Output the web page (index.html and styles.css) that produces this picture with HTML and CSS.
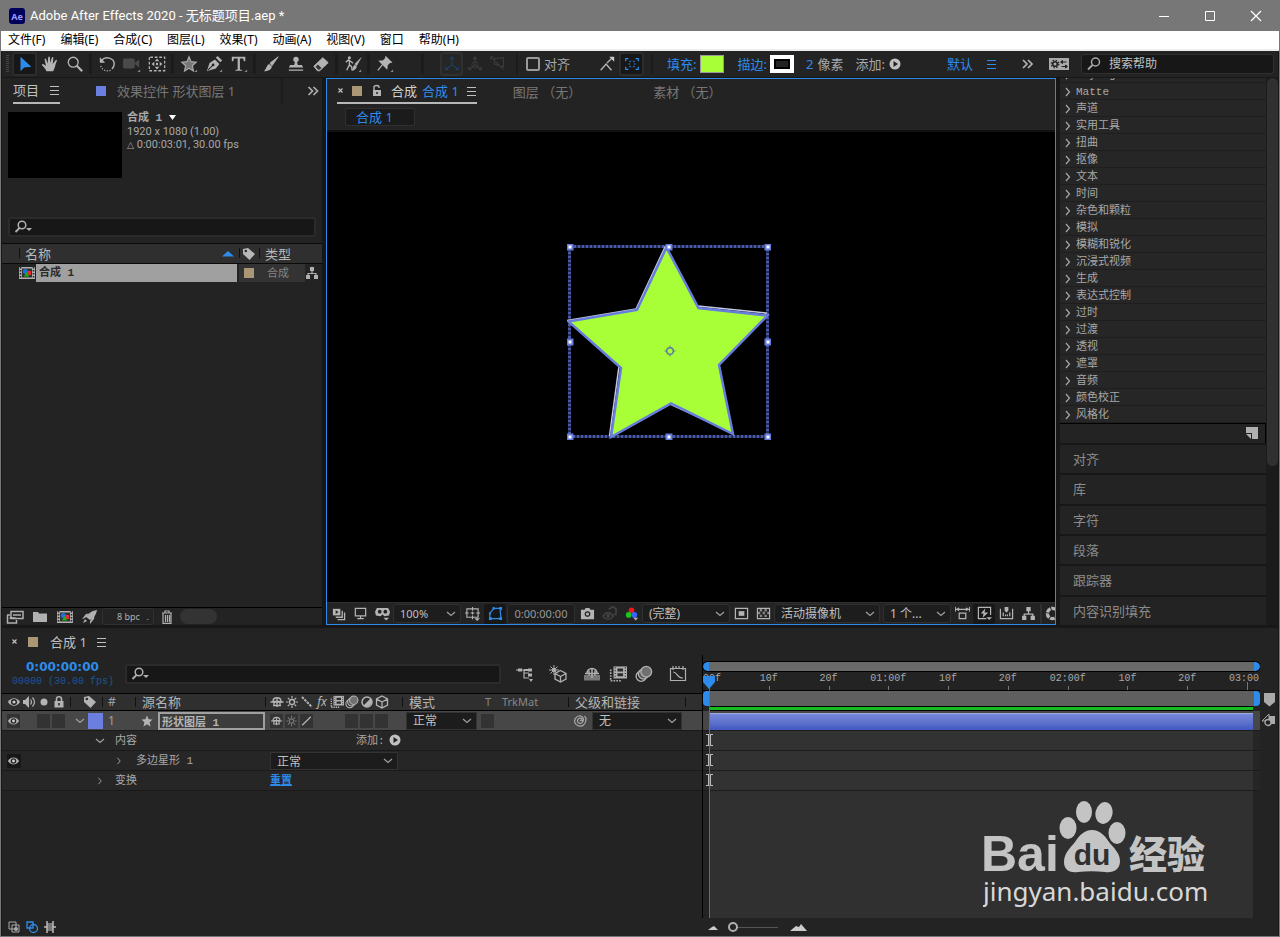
FILE: index.html
```html
<!DOCTYPE html>
<html lang="zh-CN">
<head>
<meta charset="utf-8">
<meta name="viewport" content="width=device-width, initial-scale=1">
<title>Adobe After Effects 2020 - 无标题项目.aep *</title>
<link rel="stylesheet" href="styles.css">
</head>
<body>
<svg class="sprite" aria-hidden="true">
  <symbol id="corner" viewBox="0 0 20 20"><path d="M19 16v3h-3z" fill="#8a8a8a"/></symbol>
  <symbol id="search" viewBox="0 0 16 16"><circle cx="9.500" cy="6" r="4" fill="none" stroke="currentColor" stroke-width="1.500"/><path d="M6.500 9 2 13.500" stroke="currentColor" stroke-width="1.800"/></symbol>
  <symbol id="searchdrop" viewBox="0 0 20 16"><circle cx="8" cy="6" r="3.800" fill="none" stroke="currentColor" stroke-width="1.500"/><path d="M5.500 9 1.500 13" stroke="currentColor" stroke-width="1.800"/><path d="M12 9h6l-3 3z" fill="currentColor"/></symbol>
  <symbol id="menu" viewBox="0 0 10 10"><path d="M0 1.500h9M0 5.500h9M0 9.500h9" stroke="currentColor"/></symbol>
  <symbol id="more" viewBox="0 0 12 10"><path d="M1 1l4 4-4 4M6 1l4 4-4 4" fill="none" stroke="currentColor" stroke-width="1.700"/></symbol>
  <symbol id="close" viewBox="0 0 8 8"><path d="M1.500 1.500l4 4M5.500 1.500l-4 4" stroke="currentColor" stroke-width="1.200"/></symbol>
  <symbol id="right" viewBox="0 0 8 10"><path d="M2 1l3.500 4L2 9" fill="none" stroke="currentColor" stroke-width="1.200"/></symbol>
  <symbol id="down" viewBox="0 0 10 8"><path d="M1 2l4 3.500L9 2" fill="none" stroke="currentColor" stroke-width="1.200"/></symbol>
  <symbol id="eye" viewBox="0 0 14 12"><path d="M1 6c3-5 9-5 12 0-3 5-9 5-12 0z" fill="#b4b4b4"/><circle cx="7" cy="6" r="3" fill="#222"/><circle cx="7" cy="6" r="1.600" fill="#ccc"/></symbol>
  <symbol id="tag" viewBox="0 0 14 14"><path d="M1 2l5-1 7 6-5.500 6L1 7z" fill="currentColor"/><circle cx="3.800" cy="4" r="1.300" fill="#2b2b2b"/></symbol>
  <symbol id="shy" viewBox="0 0 14 14"><path d="M3 6.500C3 1.500 11 1.500 11 6.500z" fill="none" stroke="currentColor" stroke-width="1.300"/><path d="M0.500 7h13M3 10.500h8M7 3v9M4 7v3M10 7v3" stroke="currentColor" stroke-width="1.300"/></symbol>
  <symbol id="sun" viewBox="0 0 14 14"><circle cx="7" cy="7" r="2.500" fill="none" stroke="currentColor" stroke-width="1.300"/><path d="M7 1v2.500M7 10.500V13M1 7h2.500M10.500 7H13M2.800 2.800l1.700 1.700M9.500 9.500l1.700 1.700M11.200 2.800 9.500 4.500M4.500 9.500l-1.700 1.700" stroke="currentColor" stroke-width="1.200"/></symbol>
  <symbol id="film" viewBox="0 0 16 14"><path d="M1.500 3v10h10" fill="none" stroke="currentColor" stroke-width="1.500" stroke-dasharray="1.500 1"/><path d="M4 0h12v11H4z" fill="currentColor"/><path d="M7.500 2h5v2.800h-5zM7.500 6.300h5v2.800h-5z" fill="#2b2b2b"/><path d="M5.500 1v10M14.500 1v10" stroke="#2b2b2b" stroke-dasharray="1 1.500"/></symbol>
  <symbol id="blur" viewBox="0 0 16 16"><circle cx="5.500" cy="10" r="4.500" fill="none" stroke="currentColor" stroke-width="1.200"/><circle cx="7.500" cy="8" r="4.500" fill="#555" stroke="currentColor" stroke-width="1.200"/><circle cx="10" cy="6" r="4.800" fill="#707070" stroke="currentColor" stroke-width="1.200"/></symbol>
  <symbol id="cube" viewBox="0 0 14 14"><path d="M7 1l5.500 3v6L7 13l-5.500-3V4zM1.500 4 7 7l5.500-3M7 7v6" fill="none" stroke="currentColor" stroke-width="1.300"/></symbol>
  <symbol id="tree" viewBox="0 0 14 14"><path d="M5 1h4v4H5zM1 9h4v4H1zM9 9h4v4H9z" fill="currentColor"/><path d="M7 4v3.500M3 10V7.500h8V10" fill="none" stroke="currentColor" stroke-width="1.200"/></symbol>
  <symbol id="comp" viewBox="0 0 16 14"><path d="M0 1h16v12H0z" fill="#b0b0b0"/><path d="M1.500 1v12M14.500 1v12" stroke="#222" stroke-width="1.600" stroke-dasharray="1.500 1.500"/><path d="M3 2.500h10v9H3z" fill="#333"/><circle cx="6.300" cy="5.500" r="2.500" fill="#1e6fe0"/><path d="M8 5h4v4H8z" fill="#e03030"/><path d="M5 10.500 7.500 6l2.700 4.500z" fill="#18b41c"/></symbol>
  <symbol id="play" viewBox="0 0 12 12"><circle cx="6" cy="6" r="5.500" fill="#c0c0c0"/><path d="M4.500 3v6L9 6z" fill="#222"/></symbol>
  <symbol id="star" viewBox="0 0 20 20"><path d="M10 2l2.300 5.400 5.700.6-4.300 3.900 1.300 5.800-5-3-5 3 1.300-5.800L2 8l5.700-.6z" fill="currentColor"/></symbol>
</svg>

<div class="app">
  <header class="titlebar">
    <svg class="logo" viewBox="0 0 16 16" role="img" aria-label="Ae"><rect width="16" height="16" rx="3" fill="#00005b"/><text x="8" y="11.500" text-anchor="middle" class="logo-text">Ae</text></svg>
    <h1>Adobe After Effects 2020 - 无标题项目.aep *</h1>
    <button aria-label="最小化"><svg width="12" height="12"><path d="M1 6.500h10" stroke="#fff"/></svg></button>
    <button aria-label="最大化"><svg width="12" height="12"><path d="M1.500 1.500h9v9h-9z" fill="none" stroke="#fff"/></svg></button>
    <button aria-label="关闭"><svg width="12" height="12"><path d="M1 1l10 10M11 1 1 11" stroke="#fff" stroke-width="1.200"/></svg></button>
  </header>

  <nav class="menubar">
    <button>文件(F)</button><button>编辑(E)</button><button>合成(C)</button><button>图层(L)</button><button>效果(T)</button><button>动画(A)</button><button>视图(V)</button><button>窗口</button><button>帮助(H)</button>
  </nav>

  <div class="toolbar">
    <span class="grip"></span>
    <button class="tool on" aria-label="选取"><svg viewBox="0 0 20 20"><path d="M5 2v16l4-4 8-1z" fill="#2d8ceb"/></svg></button>
    <button class="tool" aria-label="手形"><svg viewBox="0 0 20 20"><path d="M6 18c-1-3-3-4.500-5-7 0-1.500 1.500-1.500 3 0l1.500 1L4 5c0-1.500 1.500-1.500 1.800 0l1.500 4.500L8 3c.2-1.600 1.800-1.600 2 0v6l2-6c.5-1.500 2-1 1.700.5L13 10l3-4c.8-1.200 2.200-.5 1.500 1-2 4-1.500 7-4 11z" fill="currentColor"/></svg></button>
    <button class="tool" aria-label="缩放"><svg viewBox="0 0 20 20"><circle cx="8" cy="8" r="5.500" fill="none" stroke="currentColor" stroke-width="1.500"/><path d="M12 12l6 6" stroke="currentColor" stroke-width="2.500"/></svg></button>
    <span class="sep"></span>
    <button class="tool" aria-label="旋转"><svg viewBox="0 0 20 20"><path d="M4 6c4-5 14-3 14 4 0 2-1 4-2.500 5.500" fill="none" stroke="currentColor" stroke-width="1.600"/><path d="M14 17c-5 2-11-1-11-6" fill="none" stroke="currentColor" stroke-width="1.200" stroke-dasharray="1.500 1.500"/><path d="M2 2.500v6h6z" fill="currentColor"/></svg></button>
    <button class="tool dim" aria-label="摄像机"><svg viewBox="0 0 20 20"><rect x="0" y="4" width="13" height="11" rx="2" fill="currentColor"/><path d="M13 9l5-4v9l-5-4z" fill="currentColor"/><use href="#corner"/></svg></button>
    <button class="tool" aria-label="锚点"><svg viewBox="0 0 20 20"><path d="M1.500 2.500v15h17v-15z" fill="none" stroke="currentColor" stroke-width="1.400" stroke-dasharray="3 2"/><circle cx="10" cy="10" r="1.300" fill="currentColor"/><path d="M10 4l2.500 3h-5zM10 16l2.500-3h-5zM4 10l3-2.500v5zM16 10l-3-2.500v5z" fill="currentColor"/></svg></button>
    <span class="sep"></span>
    <button class="tool" aria-label="星形"><svg viewBox="0 0 20 20"><path d="M10 2l2.300 5.400 5.700.6-4.300 3.900 1.300 5.800-5-3-5 3 1.300-5.800L2 8l5.700-.6z" fill="#777" stroke="#aaa" stroke-width="1.300"/><use href="#corner"/></svg></button>
    <button class="tool" aria-label="钢笔"><svg viewBox="0 0 20 20"><path d="M2 18l3-9 6-4 5 5-4 5z" fill="currentColor"/><path d="M3 17l5-5" stroke="#232323" stroke-width="1.200"/><circle cx="9" cy="11" r="1.500" fill="#232323"/><path d="M12 3l2-2 5 5-2 2z" fill="currentColor"/><use href="#corner"/></svg></button>
    <button class="tool" aria-label="文字"><svg viewBox="0 0 20 20"><path d="M2 2h15v5h-1.500L14.500 4H11v12l2.500.7v.8H6v-.8l2.500-.7V4H4.500l-1 3H2z" fill="currentColor"/><use href="#corner"/></svg></button>
    <span class="sep"></span>
    <button class="tool" aria-label="画笔"><svg viewBox="0 0 20 20"><path d="M18 2 9 9l2 3z" fill="currentColor" stroke="currentColor"/><path d="M8 10l3 3c-1 4-5 5-9 5 3-2 3-7 6-8z" fill="currentColor"/></svg></button>
    <button class="tool" aria-label="图章"><svg viewBox="0 0 20 20"><circle cx="10" cy="5" r="3" fill="currentColor"/><path d="M9 7h2l1 4h4.500l1.500 3H2l1.500-3H8zM2 16h16v1.500H2z" fill="currentColor"/></svg></button>
    <button class="tool" aria-label="橡皮擦"><svg viewBox="0 0 20 20"><path d="M2 12.500 12 3l6 5.500-9.500 9H6z" fill="currentColor" stroke="currentColor"/><path d="M4 13l2.500-2.500 4 4-2.500 2H7z" fill="#333"/></svg></button>
    <span class="sep"></span>
    <button class="tool" aria-label="Roto 笔刷"><svg viewBox="0 0 20 20"><circle cx="6" cy="3" r="1.700" fill="currentColor"/><path d="M2 8l3-2.500 3 2 2 1.500M6 6v5l-3 6M6 11l2.500 2L9 17" fill="none" stroke="currentColor" stroke-width="1.500"/><path d="M19 3l-7 7 2 2zM12 11l2 2c-1 3-3 4-5 4 1.500-2 1-5 3-6z" fill="currentColor" stroke="currentColor" stroke-width=".6"/><use href="#corner"/></svg></button>
    <span class="sep"></span>
    <button class="tool" aria-label="人偶位置控点"><svg viewBox="0 0 20 20"><path d="M11 2l6 6-2 .500-2.500 2.500-.5 4L4 7l4-.5L10.500 4zM7 11l-5 6" fill="currentColor" stroke="currentColor" stroke-width="1.300"/><use href="#corner"/></svg></button>
    <span class="sep wide"></span>
    <button class="tool axis on" aria-label="本地轴"><svg viewBox="0 0 20 20"><path d="M10 3v8L3 16M10 11l7 5M8 5l2-3 2 3M3 13v3h3M17 13v3h-3" fill="none" stroke="currentColor" stroke-width="1.200"/></svg></button>
    <button class="tool axis" aria-label="世界轴"><svg viewBox="0 0 20 20"><path d="M10 3v8L3 16M10 11l7 5M8 5l2-3 2 3M3 13v3h3M17 13v3h-3" fill="none" stroke="currentColor" stroke-width="1.200"/><circle cx="10" cy="11" r="3.500" fill="none" stroke="currentColor"/></svg></button>
    <button class="tool axis" aria-label="视图轴"><svg viewBox="0 0 20 20"><path d="M6 4l10-1v10L6 10zM2 2l14 14M2 5V2h3" fill="none" stroke="currentColor" stroke-width="1.200"/></svg></button>
    <span class="sep wide-s"></span>
    <label class="snap"><input type="checkbox">对齐</label>
    <button class="tool snapicon" aria-label="对齐选项"><svg viewBox="0 0 20 20"><path d="M3 17l6-7 6 7M10 9l5-5" fill="none" stroke="currentColor" stroke-width="1.500"/><path d="M12.500 2H18v5.500z" fill="#ccc"/></svg></button>
    <button class="tool on blue" aria-label="对齐区域"><svg viewBox="0 0 20 20"><path d="M3 7V4h3M14 4h3v3M17 13v3h-3M6 16H3v-3" fill="none" stroke="currentColor" stroke-width="1.300"/><path d="M7 7h6v6H7z" fill="none" stroke="currentColor" stroke-dasharray="2 2"/></svg></button>
    <span class="sep wide-s"></span>
    <div class="shape-opts">
      <button class="link">填充:</button><button class="fill-swatch" aria-label="填充颜色"></button>
      <button class="link stroke-link">描边:</button><button class="stroke-swatch" aria-label="描边颜色"></button>
      <button class="link num">2</button><span>像素</span>
      <span class="add">添加:</span><svg class="i12"><use href="#play"/></svg>
    </div>
    <div class="workspaces">
      <button class="link">默认</button><svg class="i10 blue"><use href="#menu"/></svg>
      <svg class="more ws-more"><use href="#more"/></svg>
      <svg class="sync" viewBox="0 0 20 12"><path d="M0 0h20v12H0z" fill="#aaa"/><circle cx="6" cy="6" r="2.300" fill="none" stroke="#222" stroke-width="1.600"/><circle cx="6" cy="6" r="3.800" fill="none" stroke="#222" stroke-width="1.200" stroke-dasharray="1.500 1.500"/><path d="M12.500 4h5M12.500 8.500h5M13.500 2.500v3l-2-1.500zM16.500 7v3l2-1.500z" fill="#222" stroke="#222"/></svg>
      <label class="help"><svg class="i16"><use href="#search"/></svg><input type="text" placeholder="搜索帮助" aria-label="搜索帮助"></label>
    </div>
  </div>

  <main class="workspace">
    <section class="panel project">
      <div class="tabs">
        <button class="tab active">项目<svg class="i10"><use href="#menu"/></svg></button>
        <button class="tab effects-tab"><i class="sq purple"></i>效果控件 形状图层 1</button>
        <svg class="more"><use href="#more"/></svg>
      </div>
      <div class="summary">
        <div class="thumb"></div>
        <div class="info"><b>合成 1 <svg width="7" height="6"><path d="M0 0h7L3.500 5z" fill="#fff"/></svg></b><span>1920 x 1080 (1.00)</span><span><small>△</small> 0:00:03:01, 30.00 fps</span></div>
      </div>
      <label class="search"><svg class="i20"><use href="#searchdrop"/></svg><input type="text" aria-label="搜索项目"></label>
      <table class="items">
        <colgroup><col class="c-pad"><col><col class="c-tag"><col class="c-type"><col class="c-net"></colgroup>
        <thead><tr><th></th><th class="s"><span class="name-head">名称<svg width="12" height="6"><path d="M0 5.500 6 0l6 5.500z" fill="#2d8ceb"/></svg></span></th><th class="s"><svg class="i14"><use href="#tag"/></svg></th><th class="s">类型</th><th></th></tr></thead>
        <tbody><tr><td></td><td><span class="item"><svg class="i16"><use href="#comp"/></svg><b>合成 1</b></span></td><td class="t"><i class="sq tan"></i></td><td class="t kind">合成</td><td><svg class="i14"><use href="#tree"/></svg></td></tr></tbody>
      </table>
      <footer class="project-foot">
        <button aria-label="解释素材"><svg viewBox="0 0 18 14"><path d="M5 1.500h12v7H5z" fill="none" stroke="currentColor" stroke-width="1.500"/><path d="M7 5h8M1 5h3M1.500 5v8h9v-3M3.500 8h6" stroke="currentColor" stroke-width="1.500" fill="none"/></svg></button>
        <button aria-label="新建文件夹"><svg viewBox="0 0 18 14"><path d="M2 2h5l1 1.500h8V12H2z" fill="currentColor"/></svg></button>
        <button aria-label="新建合成"><svg viewBox="0 0 16 14"><use href="#comp"/></svg></button>
        <button aria-label="项目设置"><svg viewBox="0 0 18 14"><path d="M16 0C10 1 7 4 5 7l4 3c4-2 6-5 7-10zM4 8 1 9l4-5 3-.5M9 11v3l4-5 .5-3M4 9l-2 4 4-2z" fill="currentColor"/></svg></button>
        <button class="bpc">8 bpc<span>.</span></button>
        <button aria-label="删除"><svg viewBox="0 0 18 14"><path d="M4 3h10M7 3V1h4v2M5 3.500v9.800h8V3.500M7.500 5v7M9.500 5v7M11.500 5v7" fill="none" stroke="currentColor" stroke-width="1.200"/></svg></button>
        <span class="pill"></span>
      </footer>
    </section>

    <section class="panel viewer">
      <div class="tabs">
        <button class="tab active"><svg class="i8"><use href="#close"/></svg><i class="sq tan"></i><svg class="lock" viewBox="0 0 12 14"><path d="M2 6h8v6H2z" fill="#b5b5b5"/><path d="M3 6V3c0-2 5-2 5 0v1" fill="none" stroke="#b5b5b5" stroke-width="1.400"/><path d="M6 8v2" stroke="#222" stroke-width="1.500"/></svg><span class="bright">合成</span><span class="blue">合成 1</span><svg class="i10"><use href="#menu"/></svg></button>
        <button class="tab t-layer">图层 （无）</button>
        <button class="tab t-foot">素材 （无）</button>
      </div>
      <div class="crumbs"><button>合成 1</button></div>
      <div class="canvas">
        <svg class="shape" viewBox="0 0 204 196" width="204" height="196">
          <path d="M2.500 2.500h198v190H2.500z" fill="none" stroke="#4a5aaa" stroke-width="3" stroke-dasharray="3 1"/>
          <path d="M99 2 69 65 0 76.500z" fill="none"/>
          <path d="M98.500 2 69 65 .500 76.500 52 122 42.500 192M44 193l59-33 61 28M131 62l68 7-49 50" fill="none" stroke="#c5c8e0" stroke-width="1.500"/>
          <path d="M99.500 3.500 70 66 1.500 77.500 54 124 44 193 104 159.500 166 190 152 121 200.500 71.500 131.500 64z" fill="#a8ff38" stroke="#677ddd" stroke-width="2.500"/>
          <g fill="#fff" stroke="#677ddd" stroke-width="2"><path d="M0 0h5v5H0zM99 0h5v5h-5zM198 0h5v5h-5zM0 95h5v5H0zM198 95h5v5h-5zM0 190h5v5H0zM99 190h5v5h-5zM198 190h5v5h-5z" transform="translate(.5 .5)"/></g>
          <circle cx="103" cy="107" r="3.300" fill="none" stroke="#5e7ca0" stroke-width="1.500"/><path d="M103 101.500v2M103 110.500v2M97.500 107h2M106.500 107h2" stroke="#5e7ca0"/>
        </svg>
      </div>
      <footer class="view-foot">
        <button aria-label="始终预览"><svg viewBox="0 0 16 16"><path d="M2 3h8v7H2z" fill="currentColor"/><path d="M5 4.500v4L8 6.500z" fill="#222"/><path d="M12 5v7H5M14.500 7v7.500H7" fill="none" stroke="currentColor" stroke-width="1.400"/></svg></button>
        <button aria-label="主查看器"><svg viewBox="0 0 16 16"><path d="M2.500 2.500h11v8h-11zM8 11v3M4.500 13.500h7" fill="none" stroke="currentColor" stroke-width="1.300"/></svg></button>
        <button aria-label="VR"><svg viewBox="0 0 16 16"><path d="M2 2h12l2 4-1 4-5 1-2-2-2 2-5-1-1-4z" fill="currentColor"/><circle cx="5" cy="6" r="2" fill="#222"/><circle cx="11" cy="6" r="2" fill="#222"/><path d="M9 12.500h6l-3 3z" fill="currentColor"/></svg></button>
        <label class="sel w68"><select aria-label="放大率"><option>100%</option></select><svg class="chev"><use href="#down"/></svg></label>
        <button aria-label="网格"><svg viewBox="0 0 16 16"><path d="M2 3h12v9H2zM8 1v4M8 10v4M0 7.500h4M12 7.500h4M6 7.500h4M8 6v3" fill="none" stroke="currentColor" stroke-width="1.200"/><path d="M10 13h6l-3 3z" fill="currentColor"/></svg></button>
        <button class="on blue" aria-label="蒙版路径"><svg viewBox="0 0 16 16"><path d="M2 13.500V8l4-5.500h8l-1 3.500 1 7.500z" fill="none" stroke="currentColor" stroke-width="1.300"/><path d="M1 12h3v3H1zM12 1h3v3h-3zM12 12h3v3h-3zM5 1h2v3H5zM1 7h2v2H1z" fill="currentColor"/></svg></button>
        <button class="time">0:00:00:00</button>
        <button aria-label="快照"><svg viewBox="0 0 16 16"><path d="M1 4h4l1-2h4l1 2h4v10H1z" fill="currentColor"/><circle cx="8" cy="8.500" r="3" fill="#222"/><circle cx="8" cy="8.500" r="1.700" fill="currentColor"/></svg></button>
        <button class="faint" aria-label="显示快照"><svg viewBox="0 0 16 16"><path d="M1 11c3-5 8-5 11 0-3 4-8 4-11 0z" fill="none" stroke="currentColor" stroke-width="1.500"/><circle cx="6.500" cy="10.500" r="2" fill="currentColor"/><path d="M7 3h2l1-2h3l1 2h1v6h-3" fill="none" stroke="currentColor" stroke-width="1.500"/></svg></button>
        <button aria-label="通道"><svg viewBox="0 0 16 16"><circle cx="8" cy="4.500" r="3" fill="#f01818"/><circle cx="5" cy="9.500" r="3" fill="#18c81c"/><circle cx="11" cy="9.500" r="3" fill="#3468ff"/><path d="M10 12.500h5l-2.500 3z" fill="currentColor"/></svg></button>
        <label class="sel w88"><select aria-label="分辨率"><option>(完整)</option></select><svg class="chev"><use href="#down"/></svg></label>
        <button aria-label="目标区域"><svg viewBox="0 0 16 16"><path d="M1.500 2.500h13v11h-13z" fill="none" stroke="currentColor" stroke-width="1.300"/><path d="M5 5.500h6v5H5z" fill="currentColor"/></svg></button>
        <button aria-label="透明网格"><svg viewBox="0 0 16 16"><path d="M1.500 2.500h13v11h-13z" fill="none" stroke="currentColor" stroke-width="1.200"/><path d="M4 4.500h10M2 7.500h12M4 10.500h10" stroke="currentColor" stroke-width="2.500" stroke-dasharray="2.500 2.500" opacity=".7"/></svg></button>
        <label class="sel w106"><select aria-label="视图"><option>活动摄像机</option></select><svg class="chev"><use href="#down"/></svg></label>
        <label class="sel w68 second"><select aria-label="视图布局"><option>1 个...</option></select><svg class="chev"><use href="#down"/></svg></label>
        <button aria-label="像素长宽比"><svg viewBox="0 0 16 16"><path d="M0 3.500h16M4.500 7.500h7v6h-7z" fill="none" stroke="currentColor" stroke-width="1.300"/><path d="M.5 1v5M15.500 1v5M4 2v3L2 3.500zM12 2v3l2-1.500z" fill="currentColor" stroke="currentColor"/></svg></button>
        <button class="on" aria-label="快速预览"><svg viewBox="0 0 16 16"><path d="M10 13.500H1.500v-12h13v8" fill="none" stroke="currentColor" stroke-width="1.300"/><path d="M9 2.500 4 8h3l-1 4.500L12 7H8zM10 12h6l-3 3z" fill="currentColor"/></svg></button>
        <button aria-label="时间轴"><svg viewBox="0 0 16 16"><path d="M1.500 3v10.500h13V3M4.500 7v4M7 9v2M9 9v2M11.500 7v4" fill="none" stroke="currentColor" stroke-width="1.300"/><path d="M6 1h4v4L8 7 6 5z" fill="currentColor"/></svg></button>
        <button aria-label="流程图"><svg viewBox="0 0 14 14"><use href="#tree"/></svg></button>
        <button class="aperture" aria-label="曝光"><svg viewBox="0 0 16 16"><circle cx="8" cy="8" r="5.500" fill="none" stroke="currentColor" stroke-width="3.500" stroke-dasharray="5 1"/></svg></button>
      </footer>
    </section>

    <aside class="side">
      <div class="side-main">
        <ul class="effects">
          <li><svg><use href="#right"/></svg>Keying</li><li><svg><use href="#right"/></svg>Matte</li><li><svg><use href="#right"/></svg>声道</li><li><svg><use href="#right"/></svg>实用工具</li><li><svg><use href="#right"/></svg>扭曲</li><li><svg><use href="#right"/></svg>抠像</li><li><svg><use href="#right"/></svg>文本</li><li><svg><use href="#right"/></svg>时间</li><li><svg><use href="#right"/></svg>杂色和颗粒</li><li><svg><use href="#right"/></svg>模拟</li><li><svg><use href="#right"/></svg>模糊和锐化</li><li><svg><use href="#right"/></svg>沉浸式视频</li><li><svg><use href="#right"/></svg>生成</li><li><svg><use href="#right"/></svg>表达式控制</li><li><svg><use href="#right"/></svg>过时</li><li><svg><use href="#right"/></svg>过渡</li><li><svg><use href="#right"/></svg>透视</li><li><svg><use href="#right"/></svg>遮罩</li><li><svg><use href="#right"/></svg>音频</li><li><svg><use href="#right"/></svg>颜色校正</li><li><svg><use href="#right"/></svg>风格化</li>
        </ul>
        <div class="effects-foot"><svg width="12" height="12"><path d="M0 0h12v12H6V6H0z" fill="#b0b0b0"/><path d="M0 7h5v5z" fill="#b0b0b0"/></svg></div>
        <button class="fold">对齐</button><button class="fold">库</button><button class="fold">字符</button><button class="fold">段落</button><button class="fold">跟踪器</button><button class="fold">内容识别填充</button>
      </div>
      <div class="scroll"><span></span></div>
    </aside>
  </main>

  <section class="panel timeline">
    <div class="tabs tl-tabs">
      <button class="tab"><svg class="i8"><use href="#close"/></svg><i class="sq tan"></i><span class="tl-name">合成 1</span><svg class="i10"><use href="#menu"/></svg></button>
    </div>
    <div class="tl-body">
      <div class="layers">
        <div class="tl-head">
          <div class="clock"><b>0:00:00:00</b><span>00000 (30.00 fps)</span></div>
          <label class="search"><svg class="i20"><use href="#searchdrop"/></svg><input type="text" aria-label="搜索图层"></label>
          <div class="tl-tools">
            <svg viewBox="0 0 18 16"><path d="M1 4h8v8h5M9 7h5" fill="none" stroke="currentColor" stroke-width="1.200"/><path d="M3 2.500h4v3H3zM13 2.500h4v3h-4zM13 7.500h4v3h-4zM14 13h4l-2 3zM9 3h4v2H9z" fill="currentColor"/></svg>
            <svg class="g2" viewBox="0 0 18 18"><path d="M5 0v10M0 5h10M1.500 1.500l7 7M8.500 1.500l-7 7" stroke="currentColor"/><circle cx="5" cy="5" r="2" fill="currentColor"/><path d="M11.500 5.500l5.500 3v5.500l-5.500 3-5.500-3V8.500zM6 8.500l5.500 3 5.500-3M11.500 11.500V17" fill="#232323" stroke="currentColor" stroke-width="1.300"/></svg>
            <svg class="g2" viewBox="0 0 18 16"><path d="M1 9h16v5.500H1z" fill="#777"/><path d="M4 7a5 4.500 0 0 1 10 0M2 7.500h14M9 3v9M6 4.500v5M12 4.500v5" fill="none" stroke="currentColor" stroke-width="1.500"/></svg>
            <svg class="g1" viewBox="0 0 16 14"><use href="#film"/></svg>
            <svg class="g1" viewBox="0 0 16 16"><use href="#blur"/></svg>
            <svg class="g2" viewBox="0 0 18 16"><path d="M1.500 2.500h15v12h-15zM4 0v4M7 0v2M10 0v2M14 0v4M4 6c5 0 3 6 10 6" fill="none" stroke="currentColor" stroke-width="1.200"/></svg>
          </div>
        </div>
        <div class="row cols">
          <div class="av"><svg class="i14"><use href="#eye"/></svg><svg class="i14" viewBox="0 0 14 14"><path d="M1 5h2l4-4v12L3 9H1z" fill="#b4b4b4"/><path d="M8.500 4.500q2 2.500 0 5M10.500 2.500q4 4.500 0 9" fill="none" stroke="#b4b4b4" stroke-width="1.200"/></svg><svg class="i14" viewBox="0 0 14 14"><circle cx="7" cy="7" r="3.500" fill="#b4b4b4"/></svg><svg class="i14" viewBox="0 0 14 14"><path d="M2.500 6h9v6.500h-9z" fill="#b4b4b4"/><path d="M4.500 6V4c0-3 5-3 5 0v2" fill="none" stroke="#b4b4b4" stroke-width="1.600"/><path d="M7 8v2.500" stroke="#222" stroke-width="1.500"/></svg></div>
          <div class="s lab"><svg class="i14"><use href="#tag"/></svg></div>
          <div class="s num">#</div>
          <div class="s nm">源名称</div>
          <div class="s sw"><svg class="i14"><use href="#shy"/></svg><svg class="i14"><use href="#sun"/></svg><svg class="i14" viewBox="0 0 14 14"><path d="M2 2l10 10" stroke="currentColor" stroke-width="2" stroke-dasharray="2.500 1"/></svg><em>fx</em><svg class="i14"><use href="#film"/></svg><svg class="i14"><use href="#blur"/></svg><svg class="i14" viewBox="0 0 14 14"><circle cx="7" cy="7" r="5" fill="none" stroke="currentColor" stroke-width="1.500"/><path d="M3.500 10.500l7-7a5 5 0 0 1-7 7z" fill="currentColor"/></svg><svg class="i14"><use href="#cube"/></svg></div>
          <div class="s mode">模式</div><div class="tcol">T</div><div class="trk">TrkMat</div><div class="s par">父级和链接</div><div class="s"></div>
        </div>
        <div class="row layer">
          <div class="av"><i class="box"><svg><use href="#eye"/></svg></i><i></i><i class="box"></i><i class="box"></i></div>
          <div class="lab"><svg class="chev"><use href="#down"/></svg><i class="label-color"></i></div>
          <div class="num">1</div>
          <div class="nm"><svg class="i14"><use href="#star"/></svg><input class="rename" type="text" value="形状图层 1" aria-label="图层名称"></div>
          <div class="sw"><i class="box"><svg><use href="#shy"/></svg></i><i class="box off"><svg><use href="#sun"/></svg></i><i class="box"><svg viewBox="0 0 14 14"><path d="M2 12 12 2" stroke="currentColor" stroke-width="1.500"/></svg></i><i></i><i></i><i class="box"></i><i class="box"></i><i class="box"></i></div>
          <label class="sel flat mode-sel"><select aria-label="模式"><option>正常</option></select><svg class="chev"><use href="#down"/></svg></label>
          <div class="tcol"><i class="box"></i></div><div></div>
          <div class="par parent-cell"><svg class="i14" viewBox="0 0 14 14"><path d="M9 5c-2-2-5 0-4.500 2.500S8.500 10 9.500 8 8 5.500 7 7M9.500 8C12 5 9 1.500 6 2S.500 6 2 9s6 4 8.500 2S14 4 11.500 2" fill="none" stroke="#aaa" stroke-width="1.200"/></svg><label class="sel flat"><select aria-label="父级"><option>无</option></select><svg class="chev"><use href="#down"/></svg></label></div>
        </div>
        <div class="row prop">
          <div class="av"></div><div class="twirl"><svg class="chev"><use href="#down"/></svg>内容</div><div class="val add-row">添加:<svg class="i12"><use href="#play"/></svg></div>
        </div>
        <div class="row prop">
          <div class="av"><i class="box dark"><svg><use href="#eye"/></svg></i></div><div class="twirl deep"><svg class="chev"><use href="#right"/></svg>多边星形 1</div><div class="val"><label class="sel flat"><select aria-label="混合"><option>正常</option></select><svg class="chev"><use href="#down"/></svg></label></div>
        </div>
        <div class="row prop">
          <div class="av"></div><div class="twirl"><svg class="chev"><use href="#right"/></svg>变换</div><div class="val"><a href="#reset">重置</a></div>
        </div>
      </div>

      <div class="tracks">
        <div class="navbar"></div>
        <div class="ruler"><span>:00f</span><span>10f</span><span>20f</span><span>01:00f</span><span>10f</span><span>20f</span><span>02:00f</span><span>10f</span><span>20f</span><span class="last">03:00:</span></div>
        <div class="workbar"></div>
        <div class="cache"></div>
        <div class="track sel-track"><div class="clip"></div></div>
        <div class="track"><div><svg class="key" viewBox="0 0 7 12"><path d="M0 .500h7M0 11.500h7" stroke="#bbb"/><path d="M3.500 0v12" stroke="#bbb" stroke-width="3"/></svg></div></div>
        <div class="track"><div><svg class="key" viewBox="0 0 7 12"><path d="M0 .500h7M0 11.500h7" stroke="#bbb"/><path d="M3.500 0v12" stroke="#bbb" stroke-width="3"/></svg></div></div>
        <div class="track"><div><svg class="key" viewBox="0 0 7 12"><path d="M0 .500h7M0 11.500h7" stroke="#bbb"/><path d="M3.500 0v12" stroke="#bbb" stroke-width="3"/></svg></div></div>
        <div class="empty"></div>
        <div class="playhead"><svg width="12" height="14"><path d="M0 0h12v6l-6 7-6-7z" fill="#2d8ceb"/></svg></div>
      </div>

      <div class="gutter">
        <svg width="12" height="14"><path d="M0 0h11v9l-5.500 4.500L0 9z" fill="#aaa"/></svg>
        <svg class="bin" width="15" height="14"><path d="M7 3h7v8H7z" fill="#aaa"/><path d="M1 8l7-7v7z" fill="#222" stroke="#aaa"/><circle cx="7" cy="9.500" r="3" fill="#222" stroke="#aaa" stroke-width="1.300"/></svg>
      </div>

      <div class="watermark">
        <svg viewBox="0 0 230 110" width="230" height="110">
          <g fill="#c4c4c4">
            <text x="-2" y="70" class="wm-bai">Bai</text>
            <ellipse cx="85" cy="27" rx="8.500" ry="11"/><ellipse cx="101" cy="11" rx="8" ry="11"/><ellipse cx="121" cy="12" rx="8.500" ry="11" transform="rotate(12 121 12)"/><ellipse cx="134" cy="32" rx="8.500" ry="11"/>
            <path d="M109 29c-8 0-13 6-17 12-4 5-11 11-11 20 0 9 7 11 14 10 9-1 18-1 27 0 8 1 15-2 15-11 0-8-7-14-11-19-4-6-9-12-17-12z"/>
            <text x="146" y="67" class="wm-cn">经验</text>
            <text x="0" y="100" class="wm-url">jingyan.baidu.com</text>
          </g>
          <text x="109" y="64" text-anchor="middle" class="wm-du">du</text>
        </svg>
      </div>
    </div>
    <footer class="tl-foot">
      <div class="tl-toggles"><svg viewBox="0 0 14 14"><path d="M2 2h7v7H2zM5 5h7v7H5z" fill="#232323" stroke="#aaa"/><circle cx="9" cy="9" r="2" fill="#aaa"/></svg><svg viewBox="0 0 14 14"><path d="M2 2h6v6H2z" fill="none" stroke="#2d8ceb" stroke-width="1.300"/><circle cx="8.500" cy="8.500" r="4" fill="none" stroke="#2d8ceb" stroke-width="1.300"/></svg><svg viewBox="0 0 14 14"><path d="M4 3h6v8H4z" fill="#777"/><path d="M4 1v12M10 1v12M1 7h3M10 7h3" stroke="#bbb" stroke-width="1.500"/></svg></div>
      <svg width="10" height="5"><path d="M0 5l4-3 2-1 4 4z" fill="#ccc"/></svg>
      <input type="range" min="0" max="100" value="0" aria-label="时间缩放">
      <svg width="17" height="8"><path d="M0 8l6-5 3 1 2-3 6 7z" fill="#ccc"/></svg>
    </footer>
  </section>
</div>
</body>
</html>
```
FILE: styles.css
```css
* { box-sizing: border-box; }
html, body { margin: 0; }
body {
  background: #171717;
  color: #a8a8a8;
  font: 13px/16px "Noto Sans", "Noto Sans CJK SC", sans-serif;
}
svg { display: block; flex: none; }
button, input, select { font: inherit; color: inherit; background: none; border: 0; padding: 0; margin: 0; border-radius: 0; }
button { white-space: nowrap; }
i { font-style: normal; flex: none; }
.sprite { position: absolute; width: 0; height: 0; }
.blue { color: #2d8ceb; }
.bright { color: #d0d0d0; }
.i8 { width: 8px; height: 8px; }
.i10 { width: 10px; height: 10px; }
.i12 { width: 12px; height: 12px; }
.i14 { width: 14px; height: 14px; }
.i16 { width: 16px; height: 16px; }
.i20 { width: 20px; height: 16px; }
.more { width: 12px; height: 10px; }
.sq { display: block; width: 10px; height: 10px; }
.purple { background: #6a7fe0; }
.tan { background: #ab9676; }

.app {
  display: flex;
  flex-direction: column;
  min-height: 100vh;
  border: 1px solid #777;
}

/* window chrome */
.titlebar { display: flex; align-items: center; height: 30px; padding-left: 8px; background: #777; color: #fff; }
.logo { width: 16px; height: 16px; }
.logo-text { font: bold 9px "Noto Sans", sans-serif; fill: #9999ff; }
.titlebar h1 { flex: 1; margin: 0 0 0 5px; font: 400 13px/16px Roboto, "Noto Sans CJK SC", sans-serif; }
.titlebar button { display: grid; place-items: center; width: 46px; height: 30px; }
.menubar { display: flex; gap: 15px; height: 20px; padding-left: 7px; background: #fff; color: #000; border-bottom: 2px solid #eee; font-size: 12px; }

/* toolbar */
.toolbar { display: flex; align-items: center; height: 26px; margin: 0 1px; padding-left: 4px; background: #232323; overflow: hidden; }
.grip { width: 3px; height: 18px; margin-right: 3px; background: repeating-linear-gradient(#444 0 1px, #232323 1px 2px); }
.tool { display: grid; place-items: center; flex: none; width: 25px; height: 24px; border: 2px solid transparent; border-radius: 3px; color: #b4b4b4; }
.tool svg { width: 18px; height: 18px; }
.tool.on { background: #171717; border-color: #2c2c2c; }
.tool.blue { color: #2d8ceb; }
.tool.dim { color: #4a4a4a; }
.tool.axis { width: 23px; color: #3c3c3c; }
.tool.axis.on { color: #1d4163; background: #262626; border-color: #303030; }
.sep { flex: none; width: 3px; height: 20px; margin: 0 2px; background: #1b1b1b; }
.sep.wide { margin: 0 16px 0 24px; }
.sep.wide-s { width: 2px; margin: 0 8px 0 7px; }
.snap { display: flex; align-items: center; gap: 4px; white-space: nowrap; }
.snap input { appearance: none; width: 14px; height: 14px; border: 2px solid #9a9a9a; border-radius: 2px; }
.snapicon { margin-left: 24px; }
.shape-opts { display: flex; align-items: center; margin-left: 6px; white-space: nowrap; }
.link { color: #2d8ceb; }
.fill-swatch { width: 24px; height: 18px; margin-left: 3px; background: #a8ff38; border: 1px solid #999; }
.stroke-link { margin-left: 14px; }
.stroke-swatch { width: 24px; height: 18px; margin-left: 3px; border: 4px solid #fff; outline: 2px solid #000; outline-offset: -6px; }
.num { margin: 0 4px 0 12px; }
.add { margin: 0 4px 0 12px; }
.workspaces { display: flex; flex: 1; align-items: center; justify-content: flex-end; }
.workspaces .i10 { margin-left: 14px; }
.ws-more { margin: 0 15px 0 25px; color: #b4b4b4; }
.sync { width: 20px; height: 12px; margin-right: 12px; }
.help { display: flex; align-items: center; gap: 7px; width: 193px; height: 20px; margin-right: 4px; padding-left: 4px; background: #171717; border: 1px solid #303030; border-radius: 3px; }
.help input { flex: 1; min-width: 0; font-size: 12px; }
.help input::placeholder { color: #c0c0c0; opacity: 1; }

/* workspace */
.workspace {
  flex: 1;
  display: grid;
  grid-template-columns: 320px minmax(0, 1fr) 218px;
  gap: 4px;
  margin: 1px 1px 3px;
}
.panel { display: flex; flex-direction: column; min-width: 0; background: #232323; }
.tabs { display: flex; align-items: flex-start; flex: none; white-space: nowrap; }
.tab { display: flex; align-items: center; height: 26px; color: #777; }
.tab.active { color: #c0c0c0; border-bottom: 2px solid #b8b8b8; }
.project .tabs { padding-left: 11px; padding-right: 2px; }
.project .tab .i10 { margin-left: 11px; }
.effects-tab { flex: 1; gap: 11px; margin-left: 36px; }
.project .more { width: 39px; height: 26px; padding: 8px 0 8px 24px; border-left: 2px solid #1c1c1c; color: #b0b0b0; }
.summary { display: flex; gap: 5px; height: 106px; padding: 8px 6px 0; }
.thumb { width: 114px; height: 66px; background: #000; }
.info { display: flex; flex-direction: column; font: 11px/13px Roboto, "DejaVu Sans", sans-serif; }
.info b { font-family: "Liberation Mono", "Noto Sans CJK SC", monospace; }
.info b svg { display: inline-block; }
.search { display: flex; align-items: center; flex: none; height: 20px; padding-left: 4px; background: #171717; border: 2px solid #2b2b2b; border-radius: 3px; color: #b0b0b0; }
.search input { flex: 1; min-width: 0; }
.project .search { margin: 7px 6px 6px; }
.items { width: 100%; border-collapse: collapse; table-layout: fixed; }
.c-pad { width: 17px; } .c-tag { width: 20px; } .c-type { width: 46px; } .c-net { width: 17px; }
.items th, .items td { padding: 0; text-align: left; font-weight: 400; }
.items th { height: 20px; background: #2f2f2f; color: #b8b8b8; border: solid #0a0a0a; border-width: 1px 0; }
.items th.s { background: linear-gradient(#111, #111) 0 4px / 1px 10px no-repeat #2f2f2f; padding-left: 6px; }
.items th.s:nth-child(3) { padding-left: 3px; }
.name-head { display: flex; align-items: center; justify-content: space-between; padding-right: 5px; }
.items td { height: 18px; }
.item { display: flex; align-items: center; margin-right: 2px; gap: 1px; }
.item b { flex: 1; height: 18px; padding-left: 3px; background: #a0a0a0; color: #2b2b2b; font: bold 11px/19px "Liberation Mono", "Noto Sans CJK SC", monospace; }
.items td.t { background: #333; padding-left: 5px; }
.items td.kind { padding-left: 8px; font-size: 11px; color: #858585; }
.items td .i14 { color: #b0b0b0; }
.project-foot { display: flex; align-items: center; height: 18px; margin-top: auto; border-top: 1px solid #000; color: #b0b0b0; }
.project-foot button { display: grid; place-items: center; width: 25px; height: 17px; }
.project-foot svg { width: 18px; height: 14px; }
.project-foot .bpc { display: flex; align-items: center; justify-content: space-between; width: 52px; padding: 0 4px 0 14px; border: 1px solid #303030; border-radius: 3px; font-size: 9px; }
.pill { width: 37px; height: 15px; margin-left: 1px; border-radius: 8px; background: #333; }

/* composition viewer */
.viewer { border: 1px solid #2d8ceb; }
.viewer .tabs { padding-left: 10px; }
.viewer .tab { height: 25px; }
.viewer .tab.active .sq { margin: 0 9px 0 7px; }
.lock { width: 12px; height: 14px; margin-right: 8px; }
.viewer .blue { margin-left: 5px; }
.viewer .i10 { margin-left: 8px; }
.t-layer { margin-left: 36px; }
.t-foot { margin-left: 72px; }
.crumbs { height: 28px; padding: 4px 18px; border-bottom: 2px solid #111; }
.crumbs button { width: 70px; height: 18px; padding: 0 10px; text-align: left; line-height: 14px; color: #2d8ceb; background: #1b1b1b; border: 1px solid #303030; border-radius: 2px; }
.canvas { position: relative; flex: 1; background: #000; }
.shape { position: absolute; left: 240px; top: 112px; }
.view-foot { display: flex; align-items: center; height: 22px; overflow: hidden; border-top: 1px solid #303030; color: #b4b4b4; }
.view-foot button { display: grid; place-items: center; flex: none; width: 22px; height: 20px; }
.view-foot button svg { width: 15px; height: 15px; }
.view-foot button.on { background: #171717; border-radius: 3px; }
.view-foot button.blue { margin: 0 1px; color: #2d8ceb; }
.view-foot button.faint { color: #444; }
.view-foot button.time { width: 68px; margin-right: 1px; background: #1d1d1d; border: 1px solid #303030; border-radius: 3px; font-size: 11px; color: #999; }
.view-foot button.aperture { margin-left: 1px; border-left: 2px solid #303030; }
.sel { display: grid; align-items: center; flex: none; height: 19px; background: #1d1d1d; border: 1px solid #303030; border-radius: 3px; color: #c0c0c0; font-size: 12px; }
.sel select { appearance: none; grid-area: 1 / 1; width: 100%; height: 17px; padding-left: 6px; line-height: 16px; }
.sel .chev { grid-area: 1 / 1; justify-self: end; margin-right: 4px; pointer-events: none; }
.chev { width: 10px; height: 8px; color: #a0a0a0; }
.w68 { width: 68px; } .w88 { width: 88px; } .w106 { width: 106px; }
.view-foot .w68:not(.second) { font-size: 11px; }
.second { margin-left: 3px; }

/* effects and collapsed panels */
.side { display: grid; grid-template-columns: minmax(0, 1fr) 11px; gap: 1px; background: #1b1b1b; }
.side-main { display: flex; flex-direction: column; }
.effects { display: flex; flex-direction: column; justify-content: flex-end; flex: none; height: 345px; margin: 0; padding: 0; overflow: hidden; list-style: none; background: #262626; font: 11px/16px "Liberation Mono", "Noto Sans CJK SC", monospace; }
.effects li { display: flex; align-items: center; flex: none; height: 17px; gap: 4px; padding: 1px 0 0 4px; border-bottom: 1px solid #1e1e1e; }
.effects svg { width: 8px; height: 10px; }
.effects-foot { flex: none; height: 20px; padding: 3px 7px; background: #232323; border: solid #000; border-width: 1px 1px 0 0; }
.effects-foot svg { margin-left: auto; }
.fold { flex: 1; min-height: 30px; padding-left: 13px; text-align: left; color: #8c8c8c; background: #232323; border-top: 2px solid #171717; }
.scroll span { display: block; height: 388px; border-radius: 6px; background: #303030; }

/* timeline */
.timeline { margin: 0 1px; }
.tl-tabs .tab { height: 27px; padding-left: 9px; color: #c0c0c0; }
.tl-tabs .sq { margin: 0 12px 0 9px; }
.tl-tabs .i10 { margin-left: 10px; }
.tl-body { position: relative; display: grid; grid-template-columns: 701px minmax(0, 1fr) 18px; min-height: 263px; }
.layers { border-right: 1px solid #000; }
.tl-head { display: flex; align-items: center; height: 38px; padding-left: 10px; }
.clock { display: flex; flex-direction: column; flex: none; width: 113px; color: #2d8ceb; }
.clock b { padding-left: 14px; font: bold 13px/15px "DejaVu Sans", sans-serif; font-size: 12px; }
.clock span { font: 10px/14px "Liberation Mono", monospace; color: #1d568f; }
.tl-head .search { width: 376px; }
.tl-tools { display: flex; align-items: center; margin-left: 14px; color: #b0b0b0; }
.tl-tools svg { width: 18px; height: 18px; }
.tl-tools .g2 { margin-left: 16px; }
.tl-tools .g1 { margin-left: 8px; }
.row { display: grid; align-items: center; height: 20px; grid-template-columns: 68px 32px 33px 130px 137px 78px 20px 68px 117px minmax(0, 1fr); border-bottom: 1px solid #1a1a1a; background: #262626; white-space: nowrap; }
.row.cols { height: 18px; background: #2f2f2f; border: solid #000; border-width: 1px 0; color: #b4b4b4; }
.row .s { display: flex; align-items: center; height: 100%; background: linear-gradient(#111, #111) 0 3px / 1px 10px no-repeat; }
.av { display: flex; align-items: center; gap: 1px; padding-left: 5px; }
.row .lab { display: flex; align-items: center; padding-left: 10px; }
.row .num { margin: 0; padding-left: 6px; color: #a0a0a0; font-size: 12px; }
.row.cols .lab { padding-left: 13px; }
.row.cols .nm { padding-left: 7px; }
.sw { display: flex; align-items: center; gap: 1px; padding-left: 5px; }
.sw em { width: 14px; font-size: 12px; text-align: center; line-height: 14px; }
.row.cols .mode { padding-left: 7px; }
.tcol { padding-left: 1px; }
.row.cols .tcol { padding-left: 5px; }
.row.cols .tcol, .row.cols .trk { font-size: 11px; color: #888; }
.trk { padding-left: 2px; }
.row.cols .par { padding-left: 7px; }
.row.layer { background: #474747; }
.row i { width: 14px; height: 14px; }
.box { display: grid; place-items: center; background: #333 content-box; border-right: 1px solid transparent; color: #b4b4b4; }
.box svg { width: 13px; height: 12px; }
.box.off { color: #777; }
.row .box.dark { background: #171717; }
.row.layer .lab { padding-left: 5px; gap: 3px; }
.row .label-color { width: 15px; height: 16px; background: #6a7fe0; }
.row.layer .nm { display: flex; align-items: center; gap: 4px; padding-left: 5px; color: #b4b4b4; }
.rename { flex: 1; min-width: 0; height: 18px; padding-left: 2px; background: #3c3c3c; border: 2px solid #a0a0a0; color: #b4b4b4; font: bold 11px/14px "Liberation Mono", "Noto Sans CJK SC", monospace; }
.sel.flat { border: 1px solid #333; border-radius: 0; height: 18px; background: #1c1c1c; }
.mode-sel { margin-left: 4px; width: 71px; }
.parent-cell { display: flex; align-items: center; gap: 5px; padding-left: 5px; }
.parent-cell .sel { width: 90px; }
.row.prop { grid-template-columns: 68px 200px minmax(0, 1fr); font: 11px/16px "Liberation Mono", "Noto Sans CJK SC", monospace; }
.twirl { display: flex; align-items: center; gap: 10px; padding-left: 25px; }
.twirl.deep { gap: 12px; padding-left: 44px; }
.val .sel { width: 128px; font: 12px/16px "Noto Sans CJK SC", sans-serif; }
.val a { color: #2d8ceb; font-weight: bold; text-decoration: underline; }
.add-row { display: flex; gap: 4px; padding-left: 86px; line-height: 14px; }

.tracks { position: relative; padding-top: 7px; overflow: hidden; display: flex; flex-direction: column; }
.navbar, .workbar { flex: none; border: solid #2d8ceb; border-width: 0 6px; background: #696969; }
.navbar { height: 9px; border-radius: 5px; outline: 1px solid #000; }
.workbar { height: 15px; border-radius: 4px; background: #5f5f5f; }
.ruler { display: grid; grid-template-columns: repeat(9, minmax(0, 1fr)) 13px; flex: none; height: 20px; padding-left: 6px; font: 10px/16px "Liberation Mono", monospace; border-bottom: 1px solid #000; }
.ruler span { width: 60px; margin-left: -30px; text-align: center; background: linear-gradient(#777, #777) 30px 100% / 1px 4px no-repeat; }
.ruler .last { background-size: 1px 8px; }
.cache { flex: none; height: 5px; margin: 0 7px 0 6px; background: #15bd20; border: solid #000; border-width: 1px 0; }
.track { flex: none; height: 20px; padding: 0 7px 0 6px; background: #262626; border-bottom: 1px solid #1c1c1c; }
.track > div { height: 19px; background: #323232; }
.sel-track, .sel-track > div { background: #474747; }
.track > .clip { height: 17px; background: linear-gradient(#7688da, #6073cc 50%, #4257c0); border-top: 1px solid #a0acdf; }
.sel-track { padding-top: 2px; }
.key { width: 7px; height: 12px; margin-left: -3px; position: relative; top: 3px; }
.empty { flex: 1; margin: 0 7px 0 6px; background: #303030; }
.playhead { position: absolute; left: 0; top: 21px; bottom: 0; width: 12px; background: linear-gradient(#3778b8, #3778b8) 6px 0 / 1px 100% no-repeat; }
.gutter { padding: 38px 1px 0 4px; }
.gutter .bin { margin: 6px 0 0 -3px; }
.watermark { position: absolute; right: 65px; bottom: 7px; }
.wm-bai { font: bold 50px "Liberation Sans", sans-serif; }
.wm-du { font: bold 30px "Liberation Sans", sans-serif; fill: #303030; }
.wm-cn { font: 900 38px "Noto Sans CJK SC", sans-serif; }
.wm-url { font: 26px "Noto Sans", sans-serif; fill: #d8d8d8; }
.tl-foot { display: flex; align-items: center; height: 18px; }
.tl-toggles { display: flex; gap: 4px; width: 706px; padding-left: 5px; }
.tl-toggles svg { width: 14px; height: 14px; }
.tl-foot input { appearance: none; width: 50px; height: 12px; margin: 0 12px 0 10px; background: linear-gradient(#555, #555) 0 50% / 100% 1px no-repeat; }
.tl-foot input::-webkit-slider-thumb { appearance: none; width: 10px; height: 10px; border: 2px solid #b0b0b0; border-radius: 50%; background: #232323; }
```
